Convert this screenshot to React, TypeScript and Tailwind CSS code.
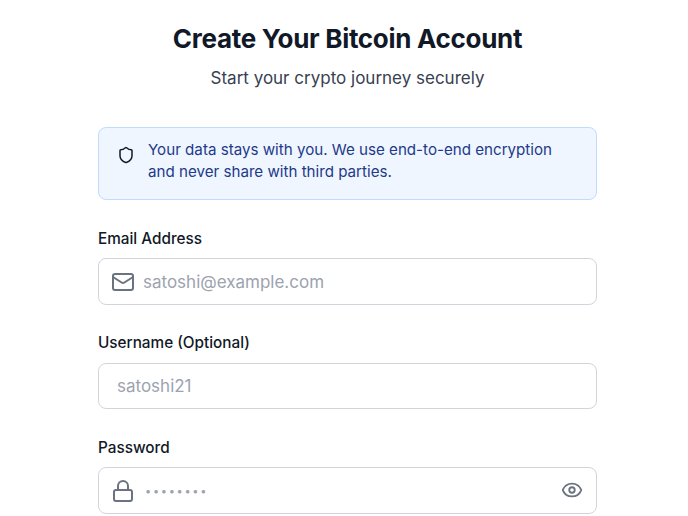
import { Eye, Lock, Mail, Shield } from "lucide-react";

const font = { fontFamily: "Inter, sans-serif" };

export default function App() {
  return (
    <div style={font} className="h-[516px] w-[688px] overflow-hidden bg-white pl-[98px]">
      <div className="w-[499px]">
        <div className="pt-[21px] text-center">
          <h1 className="text-[26px] leading-[36px] font-bold tracking-[-0.3px] text-[#111827]">
            Create Your Bitcoin Account
          </h1>
          <p className="mt-[9px] text-[17px] leading-6 text-[#374151]">Start your crypto journey securely</p>
        </div>

        <div className="mt-[37px] flex h-[73px] gap-[13px] rounded-lg border border-[#bfdbfe] bg-[#eff6ff] pt-[11px] pl-[18px]">
          <Shield className="mt-[7px] shrink-0 text-[#111827]" size={18} strokeWidth={2} />
          <p className="text-[15.15px] leading-[22px] text-[#1e3a8a]">
            Your data stays with you. We use end-to-end encryption
            <br />
            and never share with third parties.
          </p>
        </div>

        <label className="mt-[29px] block text-[15.3px] leading-5 font-medium text-[#111827]">Email Address</label>
        <div className="mt-[9px] flex h-[46.5px] items-center rounded-lg border border-[#d1d5db] pl-[12px]">
          <Mail className="mt-[2px] shrink-0 text-[#6b7280]" size={24} strokeWidth={2} />
          <input
            className="mt-[2px] ml-[8px] w-full text-[17px] outline-none placeholder:text-[#9ca3af]"
            placeholder="satoshi@example.com"
          />
        </div>

        <label className="mt-[28.5px] block text-[15.3px] leading-5 font-medium text-[#111827]">Username (Optional)</label>
        <div className="mt-[9.5px] flex h-[46.5px] items-center rounded-lg border border-[#d1d5db] pl-[18px]">
          <input className="mt-[2px] w-full text-[17px] outline-none placeholder:text-[#9ca3af]" placeholder="satoshi21" />
        </div>

        <label className="mt-[29px] block text-[15.3px] leading-5 font-medium text-[#111827]">Password</label>
        <div className="mt-[9px] flex h-[46.5px] items-center rounded-lg border border-[#d1d5db] pr-[13px] pl-[12px]">
          <Lock className="mt-[2px] shrink-0 text-[#6b7280]" size={24} strokeWidth={2} />
          <input
            type="password"
            className="mt-[1px] ml-[10px] w-full text-[11px] tracking-[1.7px] outline-none placeholder:text-[#9ca3af]"
            placeholder="••••••••"
          />
          <Eye className="shrink-0 text-[#6b7280]" size={22} strokeWidth={2} />
        </div>
      </div>
    </div>
  );
}
